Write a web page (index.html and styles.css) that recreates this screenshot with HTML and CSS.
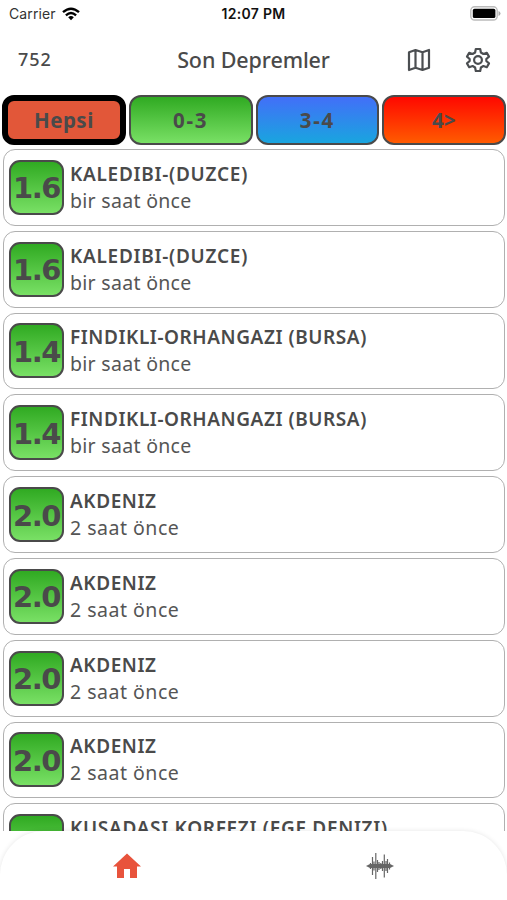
FILE: index.html
```html
<!DOCTYPE html>
<html lang="tr">
<head>
<meta charset="utf-8">
<title>Son Depremler</title>
<link rel="stylesheet" href="styles.css">
</head>
<body>
<div class="app">
  <div class="status">
    <div class="carrier"><span>Carrier</span>
      <svg width="18" height="14" viewBox="0 0 18 14" fill="none" stroke="#000" stroke-width="2.4"><path d="M1 5.2Q9-1.8 17 5.2M3.9 8.3Q9 3.9 14.1 8.3"/><path d="M6.2 10.3Q9 7.9 11.8 10.3L9 13.3Z" fill="#000" stroke="none"/></svg>
    </div>
    <div class="time">12:07 PM</div>
    <svg class="battery" width="31" height="15" viewBox="0 0 31 15"><rect x=".8" y=".8" width="26.4" height="13.2" rx="3.8" fill="#fff" stroke="#bbb" stroke-width="1.4"/><rect x="2.8" y="2.7" width="22.6" height="9.4" rx="1.7"/><path d="M28.5 5v5q2-.7 2-2.5T28.5 5z" fill="#aaa"/></svg>
  </div>
  <header class="header">
    <span class="count">752</span>
    <h1>Son Depremler</h1>
    <div class="actions">
      <svg width="24" height="24" viewBox="0 0 24 24" fill="none" stroke="#4b4e51" stroke-width="2.2" stroke-linejoin="round"><path d="M2 4.2 8.5 2l7 2.2L22 2v17.8L15.500 22l-7-2.200L2 22zM8.500 2v17.800M15.500 4.200V22"/></svg>
      <svg width="26" height="26" viewBox="0 0 26 26" fill="none" stroke="#4b4e51" stroke-width="2.2" stroke-linejoin="round"><path d="M10.800 2h4.400l.7 3.500 2.500 1.450 3.400-1.150 2.200 3.800-2.650 2.350v2.100L24 16.400l-2.200 3.800-3.400-1.150-2.500 1.450-.7 3.500h-4.400l-.7-3.500-2.500-1.450-3.400 1.150L2 16.400l2.650-2.350v-2.100L2 9.600l2.200-3.800 3.400 1.150 2.500-1.450z"/><circle cx="13" cy="13" r="3.900"/></svg>
    </div>
  </header>
  <nav class="filters">
    <button class="filter all">Hepsi</button>
    <button class="filter low">0-3</button>
    <button class="filter mid">3-4</button>
    <button class="filter high">4&gt;</button>
  </nav>
  <main class="list">
    <article class="card"><b class="mag">1.6</b><div class="info"><h2 class="duzce">KALEDIBI-(DUZCE)</h2><p>bir saat önce</p></div></article>
    <article class="card"><b class="mag">1.6</b><div class="info"><h2 class="duzce">KALEDIBI-(DUZCE)</h2><p>bir saat önce</p></div></article>
    <article class="card"><b class="mag">1.4</b><div class="info"><h2>FINDIKLI-ORHANGAZI (BURSA)</h2><p>bir saat önce</p></div></article>
    <article class="card"><b class="mag">1.4</b><div class="info"><h2>FINDIKLI-ORHANGAZI (BURSA)</h2><p>bir saat önce</p></div></article>
    <article class="card"><b class="mag">2.0</b><div class="info"><h2>AKDENIZ</h2><p class="later">2 saat önce</p></div></article>
    <article class="card"><b class="mag">2.0</b><div class="info"><h2>AKDENIZ</h2><p class="later">2 saat önce</p></div></article>
    <article class="card"><b class="mag">2.0</b><div class="info"><h2>AKDENIZ</h2><p class="later">2 saat önce</p></div></article>
    <article class="card"><b class="mag">2.0</b><div class="info"><h2>AKDENIZ</h2><p class="later">2 saat önce</p></div></article>
    <article class="card"><b class="mag"></b><div class="info"><h2 class="ege">KUSADASI KORFEZI (EGE DENIZI)</h2></div></article>
  </main>
  <footer class="tabs">
    <svg width="28" height="26" viewBox="0 0 28 26" fill="#e8533c"><path d="M14 .5 28 13.500h-4V25h-7v-9h-6v9H4V13.500H0z"/></svg>
    <svg width="28" height="26" viewBox="0 0 28 26" stroke="#666" stroke-width="1.2"><path d="M0 13 4 11h20l4 2-4 2H4z" fill="#666" stroke="none"/><path d="M4.500 10v6M6.500 4v18M8 8.500v9M9.800 0v26M11.500 7v12M13 9v8M14.800 10v6M16.500 8v10M18.300 1.500v23M20 8v10M21.500 6v14M23.500 9.500v7"/></svg>
  </footer>
</div>
</body>
</html>
```
FILE: styles.css
```css
* { box-sizing: border-box; }
body { margin: 0; background: #fff; color: #4a4a4a; font-family: "Noto Sans", sans-serif; }
h1, h2, p { margin: 0; white-space: nowrap; }
.app { width: 507px; height: 900px; display: flex; flex-direction: column; overflow: hidden; }
.status { height: 28px; padding: 0 6px 1px 9px; display: grid; grid-template-columns: 1fr auto 1fr; align-items: center; font: 14px Inter, sans-serif; color: #111; }
.carrier { display: flex; align-items: center; gap: 6px; color: #333; letter-spacing: .1px; }
.time { margin-right: 3px; font-weight: 600; font-size: 14px; letter-spacing: .3px; }
.battery { justify-self: end; }
.header { height: 66px; padding: 0 16px 2px 18px; display: grid; grid-template-columns: 1fr auto 1fr; align-items: center; }
.count { font-size: 18px; font-weight: 500; letter-spacing: 1px; line-height: 24px; padding-bottom: 2px; }
h1 { margin-right: 2px; font-size: 21.5px; line-height: 30px; font-weight: 500; letter-spacing: -.1px; }
.actions { display: flex; justify-content: flex-end; align-items: center; gap: 34px; padding-bottom: 1px; }
.filters { height: 51px; flex: none; padding: 1px 1px 0 2px; display: grid; grid-template-columns: repeat(4, 1fr); gap: 3px; }
.filter { height: 50px; padding: 0; border: 2.5px solid #4a4a4a; border-radius: 12px; color: #4a4a4a; font: 700 20.5px "Noto Sans", sans-serif; letter-spacing: .5px; }
.low, .mid { letter-spacing: 1.8px; }
.all { background: #e25739; border: 6px solid #000; }
.low { background: linear-gradient(#30aa22, #79e065); }
.mid { background: linear-gradient(#426ff8, #19a5df); }
.high { background: linear-gradient(#ff0800, #ff5b00); }
.list { flex: 1; min-height: 0; overflow: hidden; padding: 4px 2px 0 3px; display: flex; flex-direction: column; gap: 5px; }
.card { height: 76.8px; flex: none; padding: 0 5px; border: 1.5px solid #b0b0b0; border-radius: 12px; display: flex; align-items: center; gap: 6px; }
.mag { width: 55px; height: 55px; flex: none; padding-top: 2px; border: 2.5px solid #4a4a4a; border-radius: 11px; background: linear-gradient(#30aa22, #79e065); display: flex; align-items: center; justify-content: center; font: 700 29px "DejaVu Sans", sans-serif; letter-spacing: -1.4px; }
.info { height: 55px; padding-top: 1px; }
h2 { font-size: 19px; line-height: 27px; font-weight: 600; letter-spacing: .56px; }
.duzce { letter-spacing: .72px; }
.ege { letter-spacing: .68px; }
p { font-size: 19.5px; line-height: 26px; letter-spacing: .3px; color: #555; }
.later { letter-spacing: .5px; }
.tabs { height: 69px; flex: none; padding-top: 1px; border-radius: 44px 44px 0 0; box-shadow: 0 0 5px rgba(0, 0, 0, .1); display: grid; grid-template-columns: 1fr 1fr; place-items: center; background: #fff; }
```
